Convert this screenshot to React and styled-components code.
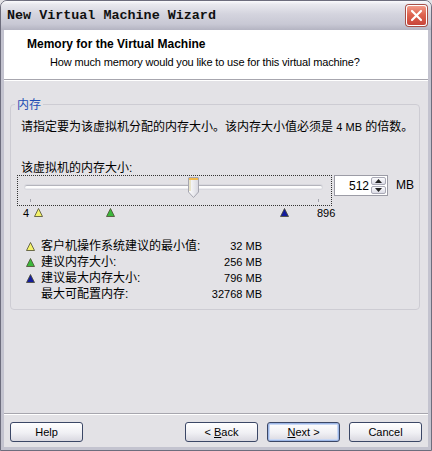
import React from 'react'
import styled, { createGlobalStyle } from 'styled-components'

const GlobalStyle = createGlobalStyle`
  html, body {
    margin: 0;
    padding: 0;
    background: #e3e2e6;
  }
  body {
    font-family: "Liberation Sans", "Noto Sans CJK SC", sans-serif;
    font-size: 11px;
    color: #000;
  }
  * { box-sizing: border-box; }
`

const MIN = 4
const MAX = 896
const VALUE = 512
// tick positions inside the slider box (px)
const TICK_START = 12
const TICK_SPAN = 288
const pos = (v) => TICK_START + ((v - MIN) / (MAX - MIN)) * TICK_SPAN

const Window = styled.div`
  width: 432px;
  height: 451px;
  display: flex;
  flex-direction: column;
  border: 1px solid #6d6d7d;
  border-radius: 7px 7px 0 0;
  overflow: hidden;
  background: #e3e2e6;
`

const TitleBar = styled.div`
  height: 29px;
  flex-shrink: 0;
  display: flex;
  align-items: center;
  justify-content: space-between;
  padding: 0 4px 0 6px;
  background: linear-gradient(#fbfbfd 0%, #e8e8ee 12%, #d4d4de 45%, #c8c8d4 80%, #b4b4c2 100%);
`

const TitleText = styled.div`
  font-family: "Liberation Mono", "DejaVu Sans Mono", monospace;
  font-weight: bold;
  font-size: 13.4px;
  color: #101010;
`

const CloseButton = styled.div`
  width: 21px;
  height: 21px;
  border-radius: 3px;
  border: 1px solid #fff;
  box-shadow: 0 0 0 1px #a65048;
  background: linear-gradient(#f29c8a, #de6450 45%, #c8453a);
  display: flex;
  align-items: center;
  justify-content: center;
`

const Frame = styled.div`
  flex: 1;
  display: flex;
  flex-direction: column;
  border: 3px solid #c3c3cf;
  border-top: none;
`

const Header = styled.div`
  height: 49px;
  flex-shrink: 0;
  background: #fff;
  padding: 7px 0 0 23px;
`

const HeaderTitle = styled.div`
  font-weight: bold;
  font-size: 12px;
  line-height: 14px;
`

const HeaderSub = styled.div`
  font-size: 11px;
  letter-spacing: -0.15px;
  line-height: 14px;
  margin: 4px 0 0 23px;
`

const Separator = styled.div`
  height: 2px;
  flex-shrink: 0;
  border-top: 1px solid #a7a6ae;
  border-bottom: 1px solid #fff;
`

const Body = styled.div`
  flex: 1;
  padding: 16px 8px 0 6px;
`

const GroupBox = styled.fieldset`
  margin: 0;
  min-width: 0;
  padding: 8px 8px 7px 6px;
  border: 1px solid #cdccd3;
  border-radius: 4px;
`

const GroupLabel = styled.legend`
  padding: 0 2px;
  margin-left: -2px;
  color: #1f4db4;
  font-size: 12px;
  line-height: 14px;
  font-family: "Noto Sans CJK SC", sans-serif;
`

const Text = styled.div`
  font-size: 12px;
  line-height: ${(p) => p.$lh || 16}px;
  padding-left: 4px;
  margin-top: ${(p) => p.$mt || 0}px;
  white-space: nowrap;
`

const Latin = styled.span`
  font-size: 11px;
`

const SliderRow = styled.div`
  display: flex;
  align-items: flex-start;
  gap: 2px;
`

const Slider = styled.div`
  position: relative;
  flex-shrink: 0;
  width: 315px;
  height: 31px;
  border: 1px dotted #333;
`

const Track = styled.div`
  position: absolute;
  left: 7px;
  width: 297px;
  top: 9px;
  height: 4px;
  border-radius: 2px;
  background: #fdfdfd;
  border-top: 1px solid #b4b4bc;
  border-bottom: 1px solid #ececf0;
  box-shadow: 0 0 0 1px #d8d8de;
`

const Tick = styled.div`
  position: absolute;
  top: 23px;
  width: 1px;
  height: 3px;
  background: #a2a2aa;
`

const Thumb = styled.svg`
  position: absolute;
  top: 1px;
`

const SpinBox = styled.div`
  width: 54px;
  height: 21px;
  flex-shrink: 0;
  background: #fff;
  border: 1px solid #9c9ca6;
  display: flex;
  align-items: center;
  padding: 1px;
`

const SpinValue = styled.div`
  flex: 1;
  text-align: right;
  font-size: 12px;
  padding-right: 2px;
`

const SpinButtons = styled.div`
  width: 15px;
  height: 17px;
  display: flex;
  flex-direction: column;
  gap: 1px;
`

const SpinButton = styled.div`
  flex: 1;
  border: 1px solid #a9a9b6;
  border-radius: 2px;
  background: linear-gradient(#fbfbfd, #dcdce6);
  display: flex;
  align-items: center;
  justify-content: center;
`

const Unit = styled.div`
  margin-left: 6px;
  line-height: 21px;
  font-size: 12px;
`

const MarkerRow = styled.div`
  position: relative;
  width: 330px;
  height: 13px;
  margin-top: 1px;
`

const MarkerLabel = styled.span`
  position: absolute;
  top: 0;
  font-size: 11px;
  line-height: 13px;
  transform: ${(p) => (p.$end ? 'translateX(-100%)' : 'none')};
`

const Marker = styled.svg`
  position: absolute;
  top: 1px;
`

const Legend = styled.div`
  display: grid;
  grid-template-columns: 9px 1fr auto;
  column-gap: 6px;
  width: 236px;
  margin: 18px 0 0 9px;
  align-items: center;
`

const LegendLabel = styled.div`
  font-size: 12px;
  line-height: 16px;
  white-space: nowrap;
`

const LegendValue = styled.div`
  font-size: 11px;
  line-height: 16px;
  text-align: right;
`

const Footer = styled.div`
  flex-shrink: 0;
  display: flex;
  gap: 9px;
  padding: 7px 6px 5px;
`

const Spacer = styled.div`
  flex: 1;
`

const Button = styled.div`
  width: 73px;
  height: 20px;
  border: 1px solid #3b4766;
  border-radius: 3px;
  background: linear-gradient(#ffffff, #f0f0f4 55%, #d9d8e0);
  box-shadow: ${(p) => (p.$default ? 'inset 0 0 0 1px #9cb6e6, inset 0 0 0 2px #c9d8f4' : 'none')};
  display: flex;
  align-items: center;
  justify-content: center;
  font-size: 11px;
  white-space: pre;
`

const TriangleIcon = ({ color, as: Comp = 'svg', style }) => (
  <Comp width="9" height="9" viewBox="0 0 9 9" style={style}>
    <path d="M4.5 0.5 L8.5 8.5 L0.5 8.5 Z" fill={color} stroke="#4a4a30" strokeWidth="0.8" strokeLinejoin="round" />
  </Comp>
)

const markers = [
  { v: 32, color: '#f4f26a' },
  { v: 256, color: '#3cb83c' },
  { v: 796, color: '#141c9c' },
]

const legend = [
  { color: '#f4f26a', label: '客户机操作系统建议的最小值:', value: '32 MB' },
  { color: '#3cb83c', label: '建议内存大小:', value: '256 MB' },
  { color: '#141c9c', label: '建议最大内存大小:', value: '796 MB' },
  { color: null, label: '最大可配置内存:', value: '32768 MB' },
]

const App = () => {
  const thumbLeft = pos(VALUE) - 6
  return (
    <>
      <GlobalStyle />
      <Window>
        <TitleBar>
          <TitleText>New Virtual Machine Wizard</TitleText>
          <CloseButton>
            <svg width="13" height="13" viewBox="0 0 13 13">
              <path d="M2 2 L11 11 M11 2 L2 11" stroke="#fff" strokeWidth="2.2" strokeLinecap="round" />
            </svg>
          </CloseButton>
        </TitleBar>
        <Frame>
          <Header>
            <HeaderTitle>Memory for the Virtual Machine</HeaderTitle>
            <HeaderSub>How much memory would you like to use for this virtual machine?</HeaderSub>
          </Header>
          <Separator />
          <Body>
            <GroupBox>
              <GroupLabel>内存</GroupLabel>
              <Text>
                请指定要为该虚拟机分配的内存大小。该内存大小值必须是 <Latin>4 MB</Latin> 的倍数。
              </Text>
              <Text $lh={14} $mt={26}>该虚拟机的内存大小:</Text>
              <SliderRow>
                <Slider>
                  <Track />
                  <Tick style={{ left: pos(MIN) }} />
                  <Tick style={{ left: pos(MAX) }} />
                  <Thumb width="11" height="21" viewBox="0 0 11 21" style={{ left: thumbLeft }}>
                    <defs>
                      <linearGradient id="thumb" x1="0" y1="0" x2="1" y2="0">
                        <stop offset="0" stopColor="#ffffff" />
                        <stop offset="1" stopColor="#d8d8e0" />
                      </linearGradient>
                    </defs>
                    <path d="M1 0.5 H10 Q10.5 0.5 10.5 1 V15 L5.5 20.5 L0.5 15 V1 Q0.5 0.5 1 0.5 Z" fill="url(#thumb)" stroke="#a6a6b0" />
                    <rect x="1" y="1" width="9" height="2" fill="#f2b84a" />
                    <rect x="1" y="3" width="2" height="11" fill="#e9e4c8" />
                  </Thumb>
                </Slider>
                <SpinBox>
                  <SpinValue>512</SpinValue>
                  <SpinButtons>
                    <SpinButton>
                      <svg width="7" height="4" viewBox="0 0 7 4"><path d="M0 4 L3.5 0 L7 4 Z" fill="#222" /></svg>
                    </SpinButton>
                    <SpinButton>
                      <svg width="7" height="4" viewBox="0 0 7 4"><path d="M0 0 L3.5 4 L7 0 Z" fill="#222" /></svg>
                    </SpinButton>
                  </SpinButtons>
                </SpinBox>
                <Unit>MB</Unit>
              </SliderRow>
              <MarkerRow>
                <MarkerLabel $end style={{ left: pos(MIN) }}>4</MarkerLabel>
                {markers.map((m) => (
                  <TriangleIcon key={m.v} as={Marker} color={m.color} style={{ left: pos(m.v) - 4.5 }} />
                ))}
                <MarkerLabel style={{ left: pos(MAX) }}>896</MarkerLabel>
              </MarkerRow>
              <Legend>
                {legend.map((row) => (
                  <React.Fragment key={row.label}>
                    {row.color ? <TriangleIcon color={row.color} /> : <span />}
                    <LegendLabel>{row.label}</LegendLabel>
                    <LegendValue>{row.value}</LegendValue>
                  </React.Fragment>
                ))}
              </Legend>
            </GroupBox>
          </Body>
          <Separator />
          <Footer>
            <Button>Help</Button>
            <Spacer />
            <Button>{'< '}<u>B</u>ack</Button>
            <Button $default><u>N</u>ext{' >'}</Button>
            <Button>Cancel</Button>
          </Footer>
        </Frame>
      </Window>
    </>
  )
}

export default App
